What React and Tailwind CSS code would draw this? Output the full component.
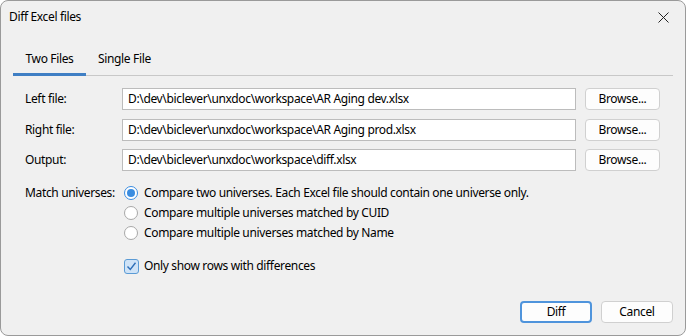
import React from 'react';

const font = { fontFamily: '"Noto Sans", "Open Sans", sans-serif' };

const FileRow = ({ label, value, className = '' }) => (
    <div className={`flex items-center h-[22px] ${className}`}>
        <div className="w-[97px] text-[12px] text-black">{label}</div>
        <div className="w-[454px] h-[22px] bg-white border border-[#bcbcbc] flex items-center px-[5px] text-[12px] text-black whitespace-nowrap overflow-hidden">
            {value}
        </div>
        <button className="ml-[9px] w-[75px] h-[22px] rounded-[4px] border border-[#d0d0d0] bg-[#fdfdfd] text-[12px] text-black flex items-center justify-center">
            Browse...
        </button>
    </div>
);

const Radio = ({ checked, children }) => (
    <div className="flex items-center h-[20px]">
        {checked ? (
            <span className="w-[14px] h-[14px] rounded-full border border-[#3b8de0] bg-white flex items-center justify-center">
                <span className="w-[8px] h-[8px] rounded-full bg-[#3b8de0]" />
            </span>
        ) : (
            <span className="w-[14px] h-[14px] rounded-full border border-[#a8a8a8] bg-white" />
        )}
        <span className="ml-[6px] text-[12px] text-black whitespace-nowrap">{children}</span>
    </div>
);

export default function App() {
    return (
        <div style={font} className="w-[686px] h-[336px] bg-[#f0f0f0] border border-[#9a9a9a] rounded-[8px] relative overflow-hidden tracking-[-0.35px]">
            {/* title bar */}
            <div className="h-[32px] flex items-center pl-[8px] pr-[16px]">
                <span className="text-[12px] text-black">Diff Excel files</span>
                <svg className="ml-auto" width="11" height="11" viewBox="0 0 11 11">
                    <path d="M0.5 0.5 L10.5 10.5 M10.5 0.5 L0.5 10.5" stroke="#222" strokeWidth="1" />
                </svg>
            </div>

            {/* tabs */}
            <div className="mx-[12px] mt-[12px] flex border-b border-[#c8c8c8] h-[31px]">
                <div className="w-[73px] flex items-center justify-center text-[12px] text-black border-b-[3px] border-[#3f7fc4] -mb-[1px]">
                    Two Files
                </div>
                <div className="px-[12px] flex items-center text-[12px] text-black pb-[3px]">
                    Single File
                </div>
            </div>

            {/* page */}
            <div className="pl-[24px] pt-[12px]">
                <FileRow label="Left file:" value="D:\dev\biclever\unxdoc\workspace\AR Aging dev.xlsx" />
                <FileRow className="mt-[9px]" label="Right file:" value="D:\dev\biclever\unxdoc\workspace\AR Aging prod.xlsx" />
                <FileRow className="mt-[8px]" label="Output:" value="D:\dev\biclever\unxdoc\workspace\diff.xlsx" />

                <div className="flex mt-[12px]">
                    <div className="w-[99px] text-[12px] text-black h-[20px] flex items-center">Match universes:</div>
                    <div className="flex flex-col">
                        <Radio checked>Compare two universes. Each Excel file should contain one universe only.</Radio>
                        <Radio>Compare multiple universes matched by CUID</Radio>
                        <Radio>Compare multiple universes matched by Name</Radio>

                        <div className="flex items-center mt-[13px] h-[20px]">
                            <span className="w-[15px] h-[15px] rounded-[3px] border border-[#5b9bd5] bg-[#cfe3f7] flex items-center justify-center">
                                <svg width="11" height="11" viewBox="0 0 11 11">
                                    <path d="M1.5 5.5 L4.3 8.5 L9.5 1.8" fill="none" stroke="#2f6fb8" strokeWidth="1.4" />
                                </svg>
                            </span>
                            <span className="ml-[5px] text-[12px] text-black">Only show rows with differences</span>
                        </div>
                    </div>
                </div>
            </div>

            {/* footer buttons */}
            <div className="absolute right-[12px] bottom-[12px] flex gap-[9px]">
                <button className="w-[72px] h-[22px] rounded-[4px] border-2 border-[#4f94dc] bg-[#fdfdfd] text-[12px] text-black flex items-center justify-center">
                    Diff
                </button>
                <button className="w-[72px] h-[22px] rounded-[4px] border border-[#d0d0d0] bg-[#fdfdfd] text-[12px] text-black flex items-center justify-center">
                    Cancel
                </button>
            </div>
        </div>
    );
}
